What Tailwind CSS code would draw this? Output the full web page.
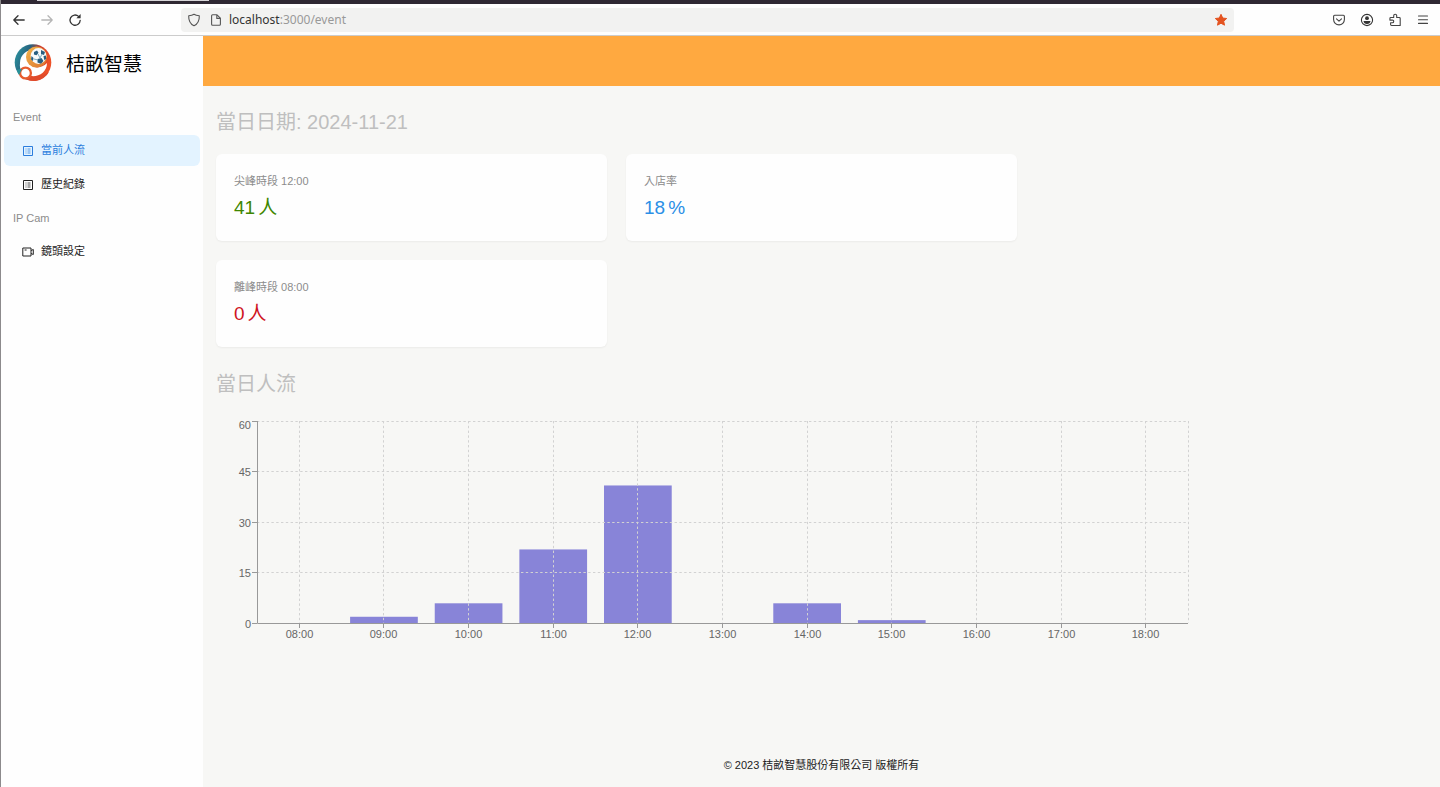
<!DOCTYPE html>
<html lang="zh-Hant">
<head>
<meta charset="utf-8">
<meta name="viewport" content="width=device-width, initial-scale=1">
<title>桔畝智慧</title>
<script src="https://cdn.jsdelivr.net/npm/@tailwindcss/browser@4"></script>
</head>
<body class="flex min-h-screen flex-col border-l border-[#8c8a8c] bg-[#f7f7f5] font-['Liberation_Sans','Noto_Sans_CJK_TC',sans-serif] text-[11px] text-[#222222]">

<!-- Browser chrome -->
<div class="flex h-1 bg-[#2f2833] pl-9"><div class="h-px w-[172px] bg-[#d8d6d9]"></div></div>
<div class="flex h-8 items-center border-b border-[#cccccc] bg-[#fefefe] text-[#444444]">
  <div class="flex w-45 shrink-0 items-center gap-3 pl-2.5">
    <button aria-label="Back" class="size-4"><svg class="size-4" viewBox="0 0 16 16" fill="none" stroke="#333" stroke-width="1.3" stroke-linecap="round" stroke-linejoin="round"><path d="M13.2 8H2.8M7 3.8 2.8 8 7 12.2"/></svg></button>
    <button aria-label="Forward" class="size-4"><svg class="size-4" viewBox="0 0 16 16" fill="none" stroke="#b5b5b5" stroke-width="1.3" stroke-linecap="round" stroke-linejoin="round"><path d="M2.8 8h10.4M9 3.8 13.2 8 9 12.2"/></svg></button>
    <button aria-label="Reload" class="size-4"><svg class="size-4" viewBox="0 0 16 16" fill="none" stroke="#333" stroke-width="1.3" stroke-linecap="round"><path d="M13.2 8.3A5.1 5.1 0 1 1 11.6 4.4"/><path d="M13.6 2v4.2H9.4z" fill="#333" stroke="none"/></svg></button>
  </div>
  <div class="flex h-6 flex-1 items-center rounded-sm bg-[#f2f2f1] px-1.5">
    <svg class="size-3.5 shrink-0" viewBox="0 0 14 14" fill="none" stroke="#555" stroke-width="1.1" stroke-linejoin="round"><path d="M7 1.2C5.6 2.2 3.6 2.6 1.7 2.7c-.2 4.600 1.200 8 5.300 10.100 4.100-2.100 5.500-5.500 5.300-10.100C10.400 2.600 8.400 2.200 7 1.200z"/></svg>
    <svg class="ml-2 size-3.5 shrink-0" viewBox="0 0 14 14" fill="none" stroke="#555" stroke-width="1.1" stroke-linejoin="round"><path d="M3.600 1.800h4.400l3.400 3.400v6q0 1-1 1H3.600q-1 0-1-1V2.800q0-1 1-1zM7.800 1.800v3.600h3.600"/></svg>
    <a href="#" class="ml-1.5 flex-1 font-['Noto_Sans','Open_Sans',sans-serif] text-xs text-[#999999]"><span class="text-[#333333]">localhost</span>:3000/event</a>
    <button aria-label="Bookmark" class="size-3.5"><svg class="size-3.5" viewBox="0 0 14 14" fill="#e45320" stroke="#e45320" stroke-linejoin="round"><path d="m7 1.300 1.700 3.700 4 .5-3 2.700.8 4L7 10.200l-3.500 2 .8-4-3-2.700 4-.5z"/></svg></button>
  </div>
  <div class="flex w-[206px] shrink-0 items-center justify-end gap-3.5 pr-2.5">
    <button aria-label="Save to Pocket" class="size-3.5"><svg class="size-3.5" viewBox="0 0 14 14" fill="none" stroke="#444" stroke-width="1.100" stroke-linecap="round" stroke-linejoin="round"><path d="M2.600 2.300h8.800q1 0 1 1v3.200a5.400 5.400 0 0 1-10.800 0V3.300q0-1 1-1z"/><path d="M4.500 5.800 7 8.200l2.500-2.400"/></svg></button>
    <button aria-label="Account" class="size-3.5"><svg class="size-3.5" viewBox="0 0 14 14"><circle cx="7" cy="7" r="5.600" fill="none" stroke="#333" stroke-width="1.100"/><circle cx="7" cy="5.200" r="1.900" fill="#333"/><path d="M3.500 7.900h7q-.3 3-3.500 3t-3.500-3z" fill="#333"/></svg></button>
    <button aria-label="Extensions" class="size-3.5"><svg class="size-3.5" viewBox="0 0 14 14" fill="none" stroke="#444" stroke-width="1.100" stroke-linejoin="round"><path d="M5.700 4.500V2.700a1.500 1.500 0 0 1 3 0v1.800h2.600q.9 0 .9.900v7.100H3.500q-.9 0-.9-.9V9.700h1.800a1.300 1.300 0 0 0 0-2.600H1.900V5.400q0-.9.9-.9z"/></svg></button>
    <button aria-label="Menu" class="size-3.5"><svg class="size-3.5" viewBox="0 0 14 14" stroke="#444" stroke-width="1.100" stroke-linecap="round"><path d="M2.500 3h9M2.500 6.700h9M2.500 10.400h9"/></svg></button>
  </div>
</div>

<div class="flex flex-1">
  <aside class="w-[202px] shrink-0 bg-[#fefefe]">
    <div class="flex h-[50px] items-center gap-3.5 pl-[13px] pt-1">
      <svg class="size-[38px]" viewBox="0 0 38 38" role="img" aria-label="桔畝智慧">
        <defs>
          <linearGradient id="ring" x1="0" y1="0" x2="1" y2=".35"><stop offset="0" stop-color="#2b9da5"/><stop offset=".4" stop-color="#28637f"/><stop offset=".65" stop-color="#ce3c2c"/><stop offset="1" stop-color="#ed5128"/></linearGradient>
          <linearGradient id="swirl" x1="0" y1="0" x2="1" y2="1"><stop offset="0" stop-color="#f2b64b"/><stop offset="1" stop-color="#dc742f"/></linearGradient>
        </defs>
        <circle cx="19" cy="18.500" r="18.300" fill="url(#ring)"/>
        <path d="M7 31A17 17 0 0 0 35 28Q22 36 9 29z" fill="#e04b2b"/>
        <path d="M6 19C6 9 16 4 24 6c-8 1-11 7-9 12 3 7 12 7 18 1 0 9-8 14-16 13C9 32 5 26 6 19z" fill="#fff"/>
        <circle cx="22.500" cy="13" r="10.500" fill="url(#swirl)"/>
        <circle cx="24.500" cy="12" r="7.900" fill="#f8fafa"/>
        <path d="m20 8 3-1.500 1.500 2.300-2 2.400-2.600-.8zM27 6l4 2-1 3-3-1zM17.500 12l2 2-.5 3-2-1.500zM23.500 15l4-1 2 3-2.500 2.700-3.500-1.200zM29.500 12l2.400-.5.3 3.500-2 1z" fill="#285e80"/>
        <path d="m24 10 2 4M20 15l4 1M28 10l-2 4" stroke="#7babc0"/>
        <circle cx="11.500" cy="29" r="5.400" fill="#fff" stroke="#e75c2d" stroke-width="2.300"/>
        <path d="M3 26a9 9 0 0 1 5-1L5 31q-1.500-2-2-5z" fill="#279399"/>
      </svg>
      <h1 class="pt-1 text-[19px] text-black">桔畝智慧</h1>
    </div>
    <nav class="px-[3px] pt-[13px]">
      <h2 class="flex h-9 items-center pl-[9px] text-[#8c8c8c]">Event</h2>
      <a href="#" aria-current="page" class="flex h-[31px] items-center gap-[7px] rounded-md bg-[#e3f3ff] pl-[18px] text-[#2b7ddd]">
        <svg class="size-3" viewBox="0 0 12 12" fill="none" stroke="currentColor"><path d="M1.500 1.500h9v9h-9z"/><path d="M3.500 4h1m1 0h3M3.500 6h1m1 0h3M3.500 8h1m1 0h3" stroke-width=".8"/></svg>當前人流</a>
      <a href="#" class="mt-[3px] flex h-[31px] items-center gap-[7px] rounded-md pl-[18px]">
        <svg class="size-3" viewBox="0 0 12 12" fill="none" stroke="currentColor"><path d="M1.500 1.500h9v9h-9z"/><path d="M3.500 4h1m1 0h3M3.500 6h1m1 0h3M3.500 8h1m1 0h3" stroke-width=".8"/></svg>歷史紀錄</a>
      <h2 class="flex h-9 items-center pl-[9px] text-[#8c8c8c]">IP Cam</h2>
      <a href="#" class="flex h-[31px] items-center gap-[7px] rounded-md pl-[18px]">
        <svg class="size-3" viewBox="0 0 12 12" fill="none" stroke="currentColor" stroke-linejoin="round"><path d="M.8 2H9v8H.8zM9 4.500l2.300-1v5L9 7.500M2.600 4h2"/></svg>鏡頭設定</a>
    </nav>
  </aside>

  <div class="flex min-w-0 flex-1 flex-col">
    <header class="h-[50px] bg-[#ffa940]"></header>
    <main class="flex-1 px-[13px] pt-5">
      <h2 class="text-xl leading-8 text-[#bfbfbf]">當日日期: 2024-11-21</h2>
      <div class="mt-4 grid grid-cols-3 gap-[19px]">
        <section class="h-[87px] rounded-md bg-[#fefefe] px-[18px] pt-[18px] shadow-xs">
          <h3 class="leading-[18px] text-[#8c8c8c]">尖峰時段 12:00</h3>
          <p class="mt-0.5 flex items-center gap-[3px] text-[19px] leading-8 text-[#3f8600]"><span>41</span><span>人</span></p>
        </section>
        <section class="h-[87px] rounded-md bg-[#fefefe] px-[18px] pt-[18px] shadow-xs">
          <h3 class="leading-[18px] text-[#8c8c8c]">入店率</h3>
          <p class="mt-0.5 flex items-center gap-[3px] text-[19px] leading-8 text-[#2b8fe6]"><span>18</span><span>%</span></p>
        </section>
        <section class="col-start-1 h-[87px] rounded-md bg-[#fefefe] px-[18px] pt-[18px] shadow-xs">
          <h3 class="leading-[18px] text-[#8c8c8c]">離峰時段 08:00</h3>
          <p class="mt-0.5 flex items-center gap-[3px] text-[19px] leading-8 text-[#cf1322]"><span>0</span><span>人</span></p>
        </section>
      </div>
      <h2 class="mt-[21px] text-xl leading-8 text-[#bfbfbf]">當日人流</h2>
      <svg id="chart" class="mt-[15px] w-[980px] max-w-full" viewBox="0 0 980 236" role="img" aria-label="當日人流"></svg>
    </main>
    <footer class="pb-[13px] text-center leading-[18px]">© 2023 桔畝智慧股份有限公司 版權所有</footer>
  </div>
</div>

<script>
const svg = document.getElementById('chart');
const counts = [0, 2, 6, 22, 41, 0, 6, 1, 0, 0, 0];
const left = 41, right = 972, top0 = 6, base = 208;
const step = (right - left) / counts.length, unit = (base - top0) / 60;
let bars = '', grid = '', axis = '', labels = '';
counts.forEach((n, i) => {
  const x = left + step * (i + 0.5), px = Math.floor(x) + 0.5, w = step * 0.8;
  if (n) bars += `<rect x="${x - w / 2}" y="${base + 0.5 - n * unit}" width="${w}" height="${n * unit}"/>`;
  grid += `<path d="M${px} ${top0}V${base}"/>`;
  axis += `<path d="M${px} ${base}v5"/>`;
  labels += `<text x="${px}" y="223" text-anchor="middle">${String(8 + i).padStart(2, '0')}:00</text>`;
});
grid += `<path d="M${right + 0.5} ${top0}V${base}"/>`;
for (let v = 0; v <= 60; v += 15) {
  const y = Math.floor(base - v * unit) + 0.5;
  if (v) grid += `<path d="M${left} ${y}H${right}"/>`;
  axis += `<path d="M${left - 5} ${y}h5"/>`;
  labels += `<text x="35" y="${v === 60 ? y + 7 : y + 4}" text-anchor="end">${v}</text>`;
}
svg.innerHTML = `<g fill="#8884d8">${bars}</g>
  <g stroke="#d2d2d2" stroke-dasharray="2.400 2.400" fill="none">${grid}</g>
  <g stroke="#999" fill="none"><path d="M${left + 0.5} ${top0}V${base + 0.5}H${right}"/>${axis}</g>
  <g fill="#666" font-size="11">${labels}</g>`;
</script>
</body>
</html>
